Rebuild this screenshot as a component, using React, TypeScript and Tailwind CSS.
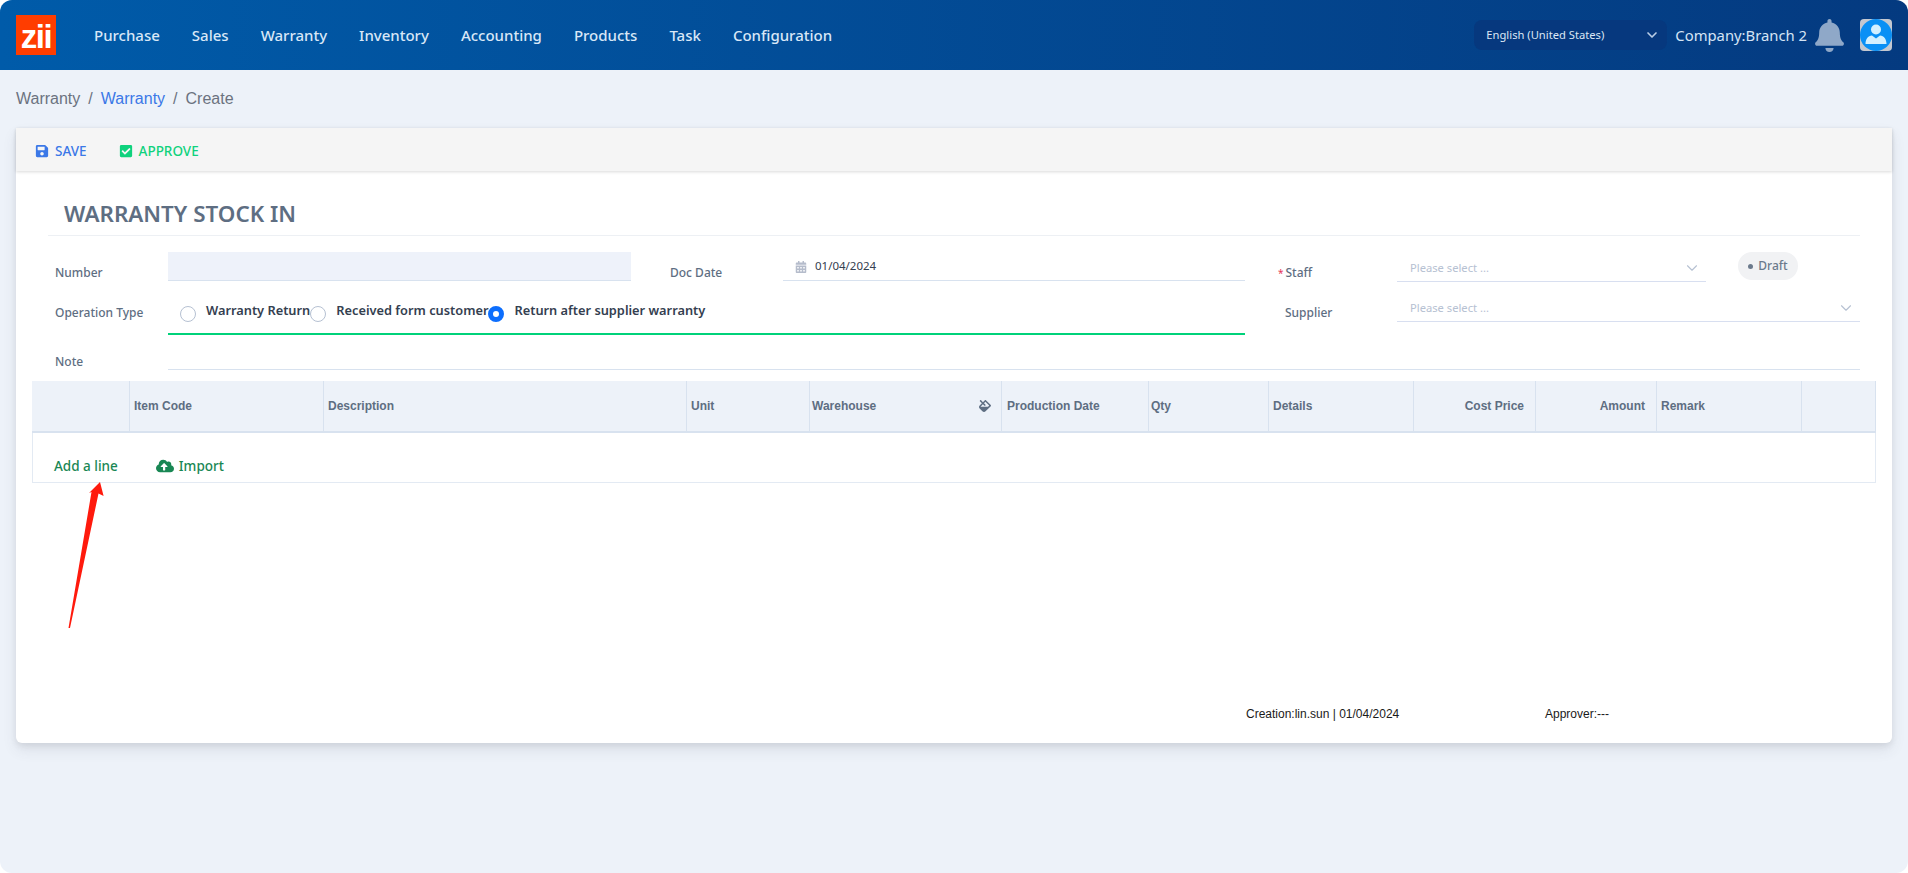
import React from 'react';
import { ChevronDown } from 'lucide-react';
import { FaBell, FaCalendarAlt, FaCheckSquare, FaCloudUploadAlt, FaFill, FaSave } from 'react-icons/fa';

const navItems = ['Purchase', 'Sales', 'Warranty', 'Inventory', 'Accounting', 'Products', 'Task', 'Configuration'];

const columns = [
  { label: '', cls: 'pl-1' },
  { label: 'Item Code', cls: 'pl-1' },
  { label: 'Description', cls: 'pl-1' },
  { label: 'Unit', cls: 'pl-1' },
  { label: 'Warehouse', cls: 'pl-[2px]', icon: true },
  { label: 'Production Date', cls: 'pl-[5px]' },
  { label: 'Qty', cls: 'pl-[2px]' },
  { label: 'Details', cls: 'pl-[4px]' },
  { label: 'Cost Price', right: true },
  { label: 'Amount', right: true },
  { label: 'Remark', cls: 'pl-[4px]' },
  { label: '', cls: 'pl-1' },
];

function Radio({ label, checked }: { label: string; checked?: boolean }) {
  return (
    <div className="flex items-center">
      <span
        className={
          checked
            ? 'mt-[6px] h-4 w-4 shrink-0 rounded-full border-[5px] border-[#0d6efd] bg-white'
            : 'mt-[6px] h-4 w-4 shrink-0 rounded-full border border-[#b6c1d2] bg-white'
        }
      />
      <span className="ml-[10px] text-[12.8px] font-semibold whitespace-nowrap text-[#344050]">{label}</span>
    </div>
  );
}

function Field({ children }: { children: React.ReactNode }) {
  return <span className="text-xs font-medium text-[#5e6e82]">{children}</span>;
}

function Select() {
  return (
    <div className="flex h-[25px] flex-1 items-start justify-between border-b border-[#d8dff0] pr-[5px] pl-[13px]">
      <span className="text-[11.2px] leading-[22px] text-[#b6c1d2]">Please select ...</span>
      <ChevronDown size={18} strokeWidth={1.5} className="mt-[2px] text-[#b6c1d2]" />
    </div>
  );
}

export default function App() {
  return (
    <div className="h-[873px] w-[1908px] overflow-hidden bg-white font-['Noto_Sans',sans-serif]">
      <div className="relative flex h-full flex-col overflow-hidden rounded-[12px] bg-[#edf2f9]">
        {/* Top bar */}
        <header className="flex h-[70px] shrink-0 items-center bg-gradient-to-r from-[#005ba9] to-[#043a80] px-4">
          <div className="flex h-10 w-10 items-end justify-center overflow-hidden bg-[#ff3d00] font-['Liberation_Sans',sans-serif] text-[33px] leading-[37px] font-bold tracking-[-1.5px] text-white">
            zii
          </div>
          <nav className="ml-[38px] flex gap-8">
            {navItems.map((item) => (
              <span key={item} className="text-[15px] font-medium text-[#d8e7f7]">
                {item}
              </span>
            ))}
          </nav>
          <div className="ml-auto flex h-[30px] w-[193px] items-center justify-between rounded-lg bg-[#06387e] pr-[7px] pl-3">
            <span className="text-[11.2px] text-[#dbe7f5]">English (United States)</span>
            <ChevronDown size={16} strokeWidth={2.5} className="text-[#b9cde6]" />
          </div>
          <span className="ml-2 text-[14.8px] text-[#d5e4f5]">Company:Branch 2</span>
          <FaBell size={33} className="ml-[6px] text-[#8fa8c8]" />
          <div className="ml-[14px] h-8 w-8 overflow-hidden rounded-sm bg-[#c4c8d0]">
            <svg viewBox="0 0 32 32" className="h-8 w-8">
              <circle cx="16" cy="16" r="16" fill="#0a90f5" />
              <circle cx="16" cy="10.5" r="5" fill="#d3f0ff" />
              <path d="M5.5 25c0-5 2.5-8 6.5-8.5l4 3 4-3c4 .5 6.5 3.5 6.5 8.5z" fill="#d3f0ff" />
            </svg>
          </div>
        </header>

        <main className="flex flex-1 flex-col px-4">
          {/* Breadcrumb */}
          <div className="flex h-[58px] items-center font-['Liberation_Sans',sans-serif] text-base text-[#6b7280]">
            <span>Warranty</span>
            <span className="mx-2">/</span>
            <span className="text-[#3b78e7]">Warranty</span>
            <span className="mx-2">/</span>
            <span>Create</span>
          </div>

          <section className="flex h-[615px] flex-col rounded-b-md bg-white shadow-[0_7px_14px_rgba(65,69,88,0.1),0_3px_6px_rgba(0,0,0,0.07)]">
            {/* Toolbar */}
            <div className="flex h-[43px] shrink-0 items-center bg-[#f5f5f5] pt-[3px] pl-[19px] text-[13.5px] font-medium shadow-[0_1px_3px_rgba(0,0,0,0.15)]">
              <span className="flex items-center gap-[6px] text-[#3b78e7]">
                <FaSave size={14} />
                SAVE
              </span>
              <span className="ml-[32px] flex items-center gap-[6px] text-[#0fd27d]">
                <FaCheckSquare size={14} />
                APPROVE
              </span>
            </div>

            {/* Title */}
            <div className="mx-8 flex h-[65px] shrink-0 items-end border-b border-[#edf0f4] pb-[4px] pl-4">
              <h1 className="text-[22.4px] font-semibold text-[#5e6e82]">WARRANTY STOCK IN</h1>
            </div>

            {/* Form */}
            <div className="mt-[16px] ml-[39px] h-[30px] shrink-0">
              <div className="flex h-full">
                <div className="flex w-[113px] items-center pt-[12px]">
                  <Field>Number</Field>
                </div>
                <div className="h-[29px] w-[463px] border-b border-[#d8e2ef] bg-[#eef2fa]" />
                <div className="ml-[39px] flex w-[113px] items-center pt-[12px]">
                  <Field>Doc Date</Field>
                </div>
                <div className="flex h-[29px] w-[462px] items-center gap-2 border-b border-[#d8e2ef] pb-[1px] pl-3">
                  <FaCalendarAlt size={12} className="mt-[2px] text-[#b5bccb]" />
                  <span className="text-[11.5px] text-[#344050]">01/04/2024</span>
                </div>
                <div className="flex w-[152px] items-center pt-[12px] pl-[33px]">
                  <span className="mr-[2px] text-[10px] text-[#e63757]">*</span>
                  <Field>Staff</Field>
                </div>
                <div className="flex w-[309px] pt-[5px]">
                  <Select />
                </div>
                <div className="ml-8 flex h-7 w-[60px] items-center justify-center gap-[5px] rounded-full bg-[#f1f2f4]">
                  <span className="h-[5px] w-[5px] rounded-full bg-[#6b7a8c]" />
                  <span className="text-xs font-medium text-[#6b7a8c]">Draft</span>
                </div>
              </div>
            </div>

            <div className="ml-[39px] flex h-[53px] shrink-0">
              <div className="flex w-[113px] items-center pt-[9px]">
                <Field>Operation Type</Field>
              </div>
              <div className="flex w-[1077px] items-start border-b-2 border-[#00d27a] pt-[18px] pl-3">
                <Radio label="Warranty Return" />
                <Radio label="Received form customer" />
                <Radio label="Return after supplier warranty" checked />
              </div>
              <div className="flex w-[152px] items-center pt-[9px] pl-10">
                <Field>Supplier</Field>
              </div>
              <div className="flex w-[463px] items-start pt-[15px]">
                <Select />
              </div>
            </div>

            <div className="mr-8 ml-[39px] flex h-[35px] shrink-0">
              <div className="flex w-[113px] items-center pt-[18px]">
                <Field>Note</Field>
              </div>
              <div className="flex-1 border-b border-[#d8e2ef]" />
            </div>

            {/* Lines table */}
            <div className="mx-4 mt-[11px] shrink-0">
              <div className="grid h-[52px] grid-cols-[98px_194px_363px_123px_192px_147px_120px_145px_122px_121px_145px_74px] border-b-2 border-[#d8e2ef] bg-[#edf2f9] font-['Liberation_Sans',sans-serif] text-xs font-bold text-[#5e6e82]">
                {columns.map((col, i) => (
                  <div
                    key={i}
                    className={
                      col.right
                        ? 'flex items-center justify-end border-r border-[#d8e2ef] pr-[11px]'
                        : `flex items-center justify-between border-r border-[#d8e2ef] pr-[10px] ${col.cls}`
                    }
                  >
                    <span>{col.label}</span>
                    {col.icon && <FaFill size={12} />}
                  </div>
                ))}
              </div>
              <div className="flex h-[50px] items-center border-x border-b border-[#e3eaf3] pt-[17px] pl-[21px] text-[13.5px] font-medium text-[#198754]">
                <span>Add a line</span>
                <span className="ml-[38px] flex items-center gap-[5px]">
                  <FaCloudUploadAlt size={18} />
                  Import
                </span>
              </div>
            </div>

            {/* Footer */}
            <div className="mt-auto flex pb-[21px] pl-[1230px] font-['Liberation_Sans',sans-serif] text-xs text-[#1a1a1a]">
              <span className="w-[299px]">Creation:lin.sun | 01/04/2024</span>
              <span>Approver:---</span>
            </div>
          </section>
        </main>

        {/* Red annotation arrow drawn over the page */}
        <svg viewBox="60 475 50 160" className="absolute top-[475px] left-[60px] h-[160px] w-[50px]">
          <polygon points="100,482 103.6,496 98.5,493.5 70,628 68.5,628 91.5,492 89,493" fill="#ff1a0d" />
        </svg>
      </div>
    </div>
  );
}
